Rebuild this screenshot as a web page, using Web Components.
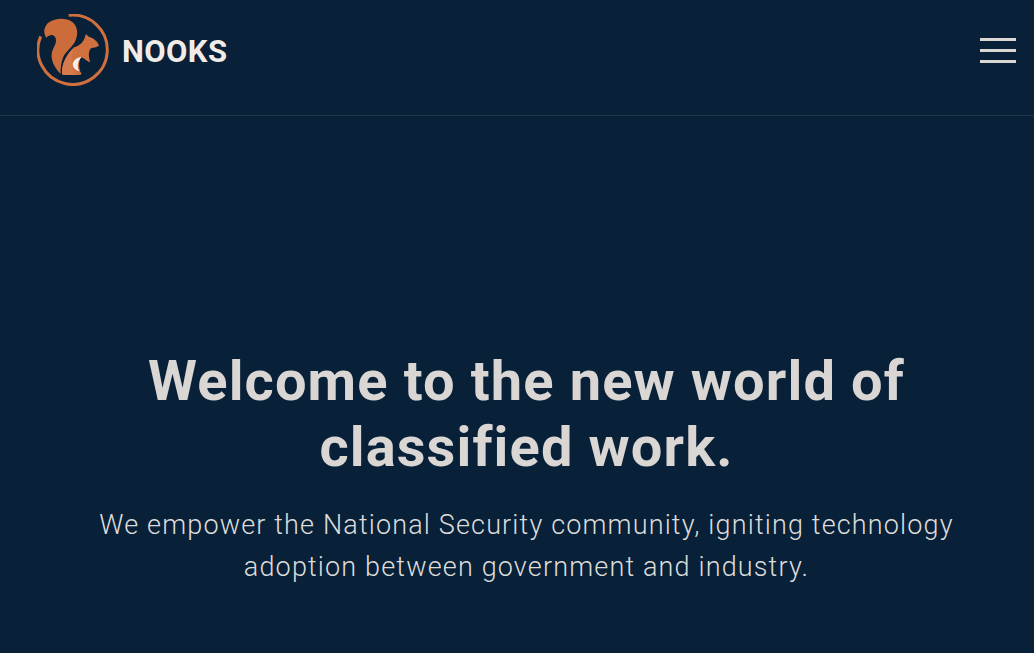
<!doctype html>
<html lang="en">
<head>
<meta charset="utf-8">
<title>Nooks</title>
<style>
    html, body {
        margin: 0;
        padding: 0;
        height: 100%;
        background-color: #082138;
        overflow: hidden;
    }

    body {
        font-family: "Roboto", "Liberation Sans", sans-serif;
    }
</style>
</head>
<body>

<template id="nk-logo-template">
    <style>
        :host {
            display: flex;
            align-items: center;
            gap: 13px;
        }

        svg {
            display: block;
            width: 72px;
            height: 72px;
        }

        span {
            padding-top: 2px;
            color: #f1ece8;
            font-size: 31px;
            font-weight: 700;
            letter-spacing: 0.4px;
            line-height: 1;
        }
    </style>
    <svg viewBox="36 27 216 216" aria-hidden="true">
        <path d="M131 31 A104 104 0 1 1 47 94" fill="none" stroke="#d0703f" stroke-width="9"/>
        <path d="M64 98 C54 84 56 64 72 52 C92 38 124 38 142 51 C160 66 160 90 150 110 C144 122 128 136 118 150 C110 164 106 186 107 207 C92 192 78 170 80 148 C82 128 97 118 92 100 C88 88 76 86 64 98 Z" fill="#cc6c3b"/>
        <path d="M147 127 C158 124 172 116 178 101 L183 87 L191 95 C205 98 217 108 222 122 C214 128 205 127 198 130 C190 138 190 155 196 172 C188 170 178 160 168 156 C160 172 162 188 166 200 L170 207 Q168 210 160 210 L116 210 Q111 210 111 204 C110 180 122 150 147 127 Z" fill="#d0703f"/>
        <path d="M146 130 C124 150 110 180 111 204 Q111 210 116 210 L152 210 C138 190 136 158 146 130 Z" fill="#d47a4c"/>
        <path d="M170 155 C155 157 143 168 143 178 C144 188 150 196 163 199 C156 186 156 170 170 155 Z" fill="#f4efe9"/>
    </svg>
    <span><slot></slot></span>
</template>

<template id="nk-menu-button-template">
    <style>
        :host {
            display: flex;
            flex-direction: column;
            gap: 8px;
            width: 36px;
        }

        i {
            display: block;
            height: 3px;
            background-color: #dad7d5;
        }
    </style>
    <i></i><i></i><i></i>
</template>

<template id="nk-header-template">
    <style>
        :host {
            display: flex;
            justify-content: space-between;
            align-items: center;
            box-sizing: border-box;
            height: 116px;
            padding: 0 18px 15px 37px;
            border-bottom: 1px solid #1e3549;
        }
    </style>
    <slot></slot>
</template>

<template id="nk-hero-template">
    <style>
        :host {
            display: flex;
            flex-direction: column;
            align-items: center;
            padding: 232px 0 0 19px;
            text-align: center;
        }

        h1 {
            margin: 0;
            color: #d9d6d4;
            font-size: 56px;
            font-weight: 700;
            letter-spacing: 1.12px;
            line-height: 66px;
            width: 820px;
        }

        p {
            margin: 24px 0 0;
            color: #dddcdb;
            font-size: 27px;
            font-weight: 300;
            letter-spacing: 1.15px;
            line-height: 42px;
            width: 880px;
        }
    </style>
    <h1><slot name="title"></slot></h1>
    <p><slot name="text"></slot></p>
</template>

<nk-header>
    <nk-logo>NOOKS</nk-logo>
    <nk-menu-button></nk-menu-button>
</nk-header>
<nk-hero>
    <span slot="title">Welcome to the new world of classified work.</span>
    <span slot="text">We empower the National Security community, igniting technology adoption between government and industry.</span>
</nk-hero>

<script>
    for (const name of ["nk-logo", "nk-menu-button", "nk-header", "nk-hero"]) {
        customElements.define(
            name,
            class extends HTMLElement {
                constructor() {
                    super();
                    const template_clone = document.getElementById(name + "-template").content.cloneNode(true);
                    this.attachShadow({ mode: "open" }).append(template_clone);
                }
            },
        );
    }
</script>
</body>
</html>
